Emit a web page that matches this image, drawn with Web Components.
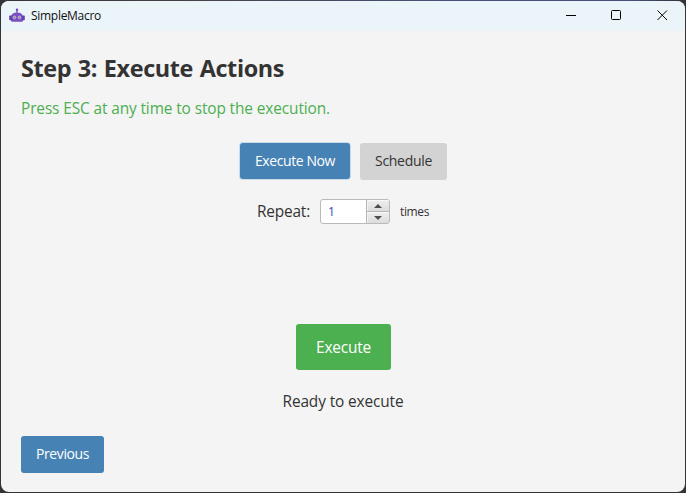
<!DOCTYPE html>
<html lang="en">
<head>
<meta charset="utf-8">
<title>SimpleMacro</title>
<style>
html,body{margin:0;height:100%;overflow:hidden;background:#343338}
body{font-family:"Open Sans","Noto Sans",sans-serif;color:#333}
</style>
</head>
<body>
<macro-window></macro-window>
<script>
// Text run whose tracking is adjusted so it fills the given width.
class FitText extends HTMLElement{
  connectedCallback(){
    const r=this.attachShadow({mode:'open'});
    r.innerHTML='<style>:host{display:block;white-space:nowrap}span{display:inline-block}</style><span><slot></slot></span>';
    const s=r.querySelector('span'),w=parseFloat(this.getAttribute('width')),n=this.textContent.length;
    this.style.width=w+'px';
    s.style.letterSpacing=((w-s.getBoundingClientRect().width)/n).toFixed(3)+'px';
  }
}

class TitleBar extends HTMLElement{
  connectedCallback(){
    this.attachShadow({mode:'open'}).innerHTML=`
<style>
:host{display:flex;height:30px;background:#ebf4f8;color:#111;align-items:center;box-sizing:border-box;padding-left:8px}
.logo{width:16px;height:16px;margin-right:6px;margin-top:-1px}
fit-text{font-size:12px;line-height:16px;margin-top:-1px;flex:1}
.ctl{display:flex;margin-right:-1px}
.ctl svg{width:46px;height:30px;display:block}
</style>
<svg class="logo" viewBox="0 0 16 16">
 <path d="M8 2v4" stroke="#6f45b8" stroke-width="1.2"/><circle cx="8" cy="1.7" r="1.2" fill="#6f45b8"/>
 <path d="M2 8.500C2.500 5.800 4.500 4.500 8 4.500s5.500 1.300 6 4V12.500q0 1.300-1.300 1.300H3.300q-1.300 0-1.300-1.300z" fill="#7850c2"/>
 <rect x=".2" y="7.500" width="2.800" height="4.800" rx=".8" fill="#6640aa"/><rect x="13" y="7.500" width="2.800" height="4.800" rx=".8" fill="#6640aa"/>
 <circle cx="5.500" cy="9.400" r="1.300" fill="#8d8298" stroke="#d4c9df" stroke-width=".8"/><circle cx="10.500" cy="9.400" r="1.300" fill="#8d8298" stroke="#d4c9df" stroke-width=".8"/>
</svg>
<fit-text width="70">SimpleMacro</fit-text>
<div class="ctl">
<svg viewBox="0 0 46 30" fill="none" stroke="#000"><path d="M18 14.500h10"/></svg>
<svg viewBox="0 0 46 30" fill="none" stroke="#000"><rect x="17.500" y="9.500" width="9" height="9" rx="1"/></svg>
<svg viewBox="0 0 46 30" fill="none" stroke="#000"><path d="M17.500 9.500l9.500 9.500M27 9.500l-9.500 9.500"/></svg>
</div>`;
  }
}

class ActionButton extends HTMLElement{
  connectedCallback(){
    this.attachShadow({mode:'open'}).innerHTML=`
<style>
:host{display:inline-flex;box-sizing:border-box;height:37px;padding:0 15px 1px;align-items:center;background:#4682b4;color:#fff;border-radius:3px;font-size:14px;line-height:20px}
:host([kind=plain]){background:#d3d3d3;color:#333}
:host([kind=go]){background:#4caf50;height:46px;padding:0 20px;font-size:15.4px;line-height:23px}
:host([selected]){box-shadow:0 0 0 1px #c9dae8;height:36px;padding-bottom:0}
</style><slot></slot>`;
  }
}

class NumberSpinner extends HTMLElement{
  connectedCallback(){
    this.attachShadow({mode:'open'}).innerHTML=`
<style>
:host{display:flex;box-sizing:border-box;width:70px;height:25px;border:1px solid #bababa;border-radius:3px;background:#fff;overflow:hidden;font-size:12px}
.v{flex:1;padding-left:7px;line-height:23px;color:#2450b4}
.b{width:22px;display:grid;grid-template-rows:1fr 1fr;gap:1px;background:#b5b5b5;border-left:1px solid #b5b5b5}
.b div{display:flex;align-items:center;justify-content:center;background:linear-gradient(#efefef,#dcdcdc);box-shadow:inset 0 1px #f8f8f8,inset 1px 0 #f2f2f2}
svg{width:8px;height:4px}
</style>
<div class="v"><slot></slot></div>
<div class="b"><div><svg viewBox="0 0 8 4"><path d="M0 4L4 0l4 4z" fill="#4d4d4d"/></svg></div><div><svg viewBox="0 0 8 4"><path d="M0 0h8L4 4z" fill="#4d4d4d"/></svg></div></div>`;
  }
}

class MacroWindow extends HTMLElement{
  connectedCallback(){
    this.attachShadow({mode:'open'}).innerHTML=`
<style>
:host{display:block;box-sizing:border-box;height:493px;width:686px;padding:1px;background:linear-gradient(90deg,#343338,#45434a 30%,#46507a 65%,#46507a 92%,#343338) 0 0/100% 1px no-repeat,#343338}
.win{height:491px;border-radius:8px;overflow:hidden;background:#f4f4f4;display:flex;flex-direction:column}
main{flex:1;display:flex;flex-direction:column;padding:21px 20px 19px}
h1{margin:0;font-size:23.400px;line-height:32px;font-weight:700;word-spacing:1px}
.hint{font-size:15.400px;line-height:22px;color:#4caf50;margin-top:14px}
.row{display:flex;justify-content:center}
.modes{margin-top:23px;height:37px;gap:10px;padding-left:1px}
.repeat{margin-top:19px;height:25px;gap:10px;align-items:center}
.lg{font-size:15.400px;line-height:22px}.sm{font-size:12px;line-height:16px}
.repeat .lg{margin-top:1px}
.repeat .sm{margin-top:1px}
.run{margin-top:100px;padding-left:1px}
.status{margin-top:21px}
.back{margin-top:auto;display:flex}
</style>
<div class="win">
<title-bar></title-bar>
<main>
<h1><fit-text width="263">Step 3: Execute Actions</fit-text></h1>
<fit-text class="hint" width="309">Press ESC at any time to stop the execution.</fit-text>
<div class="row modes"><action-button selected><fit-text width="80">Execute Now</fit-text></action-button><action-button kind="plain"><fit-text width="57">Schedule</fit-text></action-button></div>
<div class="row repeat"><fit-text class="lg" width="53">Repeat:</fit-text><number-spinner>1</number-spinner><fit-text class="sm" width="29">times</fit-text></div>
<div class="row run"><action-button kind="go"><fit-text width="55">Execute</fit-text></action-button></div>
<div class="row status"><fit-text class="lg" width="121">Ready to execute</fit-text></div>
<div class="back"><action-button><fit-text width="53">Previous</fit-text></action-button></div>
</main>
</div>`;
  }
}
customElements.define('action-button',ActionButton);
customElements.define('number-spinner',NumberSpinner);
customElements.define('title-bar',TitleBar);
customElements.define('macro-window',MacroWindow);
customElements.define('fit-text',FitText);
</script>
</body>
</html>
